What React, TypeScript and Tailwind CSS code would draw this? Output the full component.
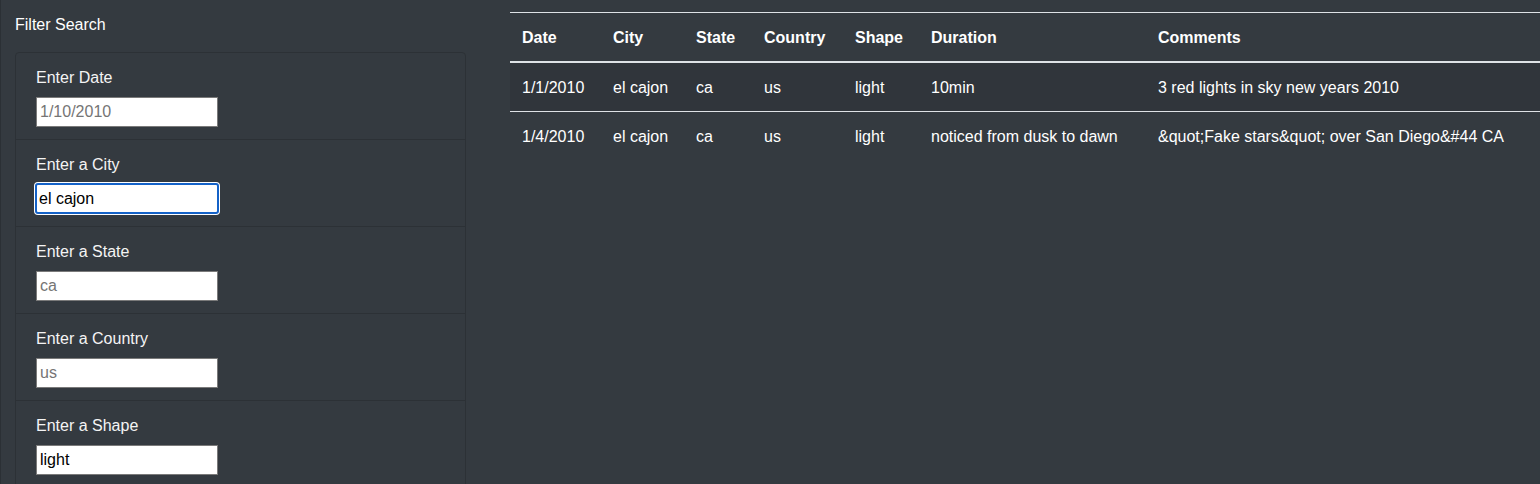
import React from "react";

const fields = [
  { label: "Enter Date", value: "", placeholder: "1/10/2010" },
  { label: "Enter a City", value: "el cajon", placeholder: "", focus: true },
  { label: "Enter a State", value: "", placeholder: "ca" },
  { label: "Enter a Country", value: "", placeholder: "us" },
  { label: "Enter a Shape", value: "light", placeholder: "" },
];

const headers = ["Date", "City", "State", "Country", "Shape", "Duration", "Comments"];
const widths = [91, 83, 68, 91, 76, 227];

const rows = [
  ["1/1/2010", "el cajon", "ca", "us", "light", "10min", "3 red lights in sky new years 2010"],
  ["1/4/2010", "el cajon", "ca", "us", "light", "noticed from dusk to dawn", "&quot;Fake stars&quot; over San Diego&#44 CA"],
];

export default function App() {
  return (
    <div
      className="flex h-[484px] w-[1540px] overflow-hidden bg-[#343a40] text-white border-l border-[#2b3035]"
      style={{ fontFamily: '"Liberation Sans", Arial, sans-serif' }}
    >
      <div className="w-[479px] shrink-0 px-[14px] pt-[13px]">
        <div className="h-6 text-[16px] leading-6">Filter Search</div>
        <div className="mt-[15px] rounded-[4px] border border-[#2c3136]">
          {fields.map((f, i) => (
            <div
              key={f.label}
              className={`px-5 pt-[13px] pb-3 ${i > 0 ? "border-t border-[#2c3136]" : ""}`}
            >
              <div className="mb-[7px] h-6 text-[16px] leading-6 text-[#f4f4f4]">{f.label}</div>
              <input
                readOnly
                value={f.value}
                placeholder={f.placeholder}
                className={
                  f.focus
                    ? "-ml-px block h-[31px] w-[184px] rounded-[3px] border-2 border-[#1462c8] bg-white px-[2px] text-[16px] text-black outline-none shadow-[0_0_0_1px_#ffffff] placeholder:text-[#757575]"
                    : "block h-[30px] w-[182px] border border-[#7a7a7a] bg-white px-[3px] text-[16px] text-black outline-none placeholder:text-[#757575]"
                }
                style={{ fontFamily: '"Liberation Sans", Arial, sans-serif', marginTop: f.focus ? -1 : 0 }}
              />
            </div>
          ))}
        </div>
      </div>
      <div className="flex-1 pl-[30px] pt-3">
        <table className="w-full table-fixed border-collapse text-[16px] leading-6">
          <colgroup>
            {widths.map((w, i) => (
              <col key={i} style={{ width: w }} />
            ))}
            <col />
          </colgroup>
          <thead>
            <tr>
              {headers.map((h) => (
                <th
                  key={h}
                  className="border-t border-b-2 border-[#dee2e6] px-3 pt-[13px] pb-[11px] text-left font-bold"
                >
                  {h}
                </th>
              ))}
            </tr>
          </thead>
          <tbody>
            {rows.map((r, ri) => (
              <tr key={ri} className={ri === 0 ? "bg-[#30353b]" : ""}>
                {r.map((c, ci) => (
                  <td
                    key={ci}
                    className={`px-3 pt-[13px] pb-[11px] whitespace-nowrap ${ri > 0 ? "border-t border-[#dee2e6]" : ""}`}
                  >
                    {c}
                  </td>
                ))}
              </tr>
            ))}
          </tbody>
        </table>
      </div>
    </div>
  );
}
